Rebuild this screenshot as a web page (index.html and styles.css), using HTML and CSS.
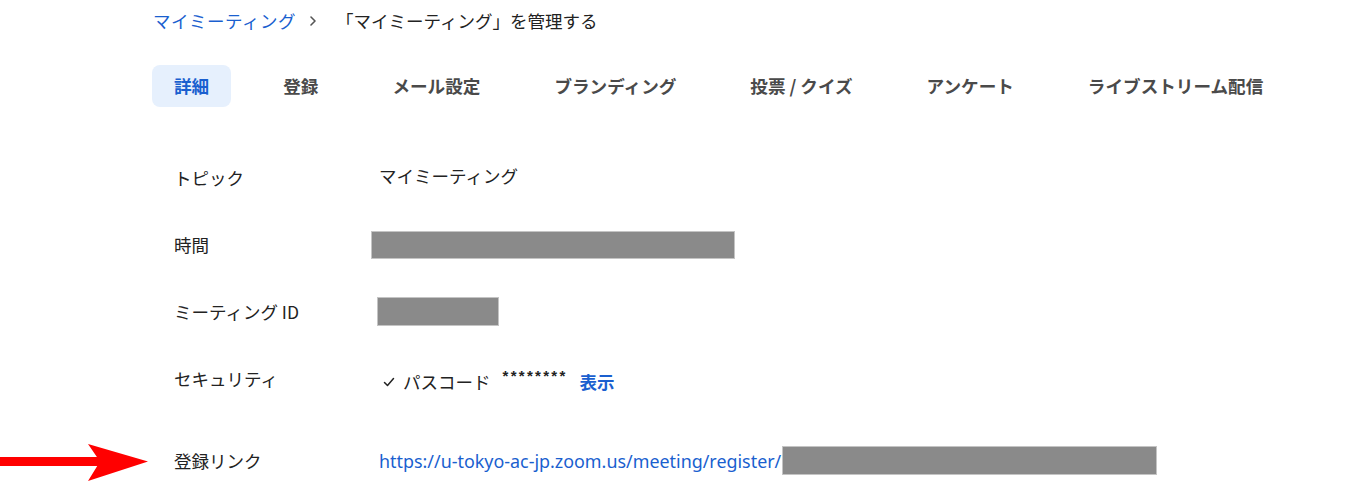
FILE: index.html
```html
<!DOCTYPE html>
<html lang="ja">
<head>
<meta charset="utf-8">
<title>「マイミーティング」を管理する</title>
<link rel="stylesheet" href="styles.css">
</head>
<body>
<div class="page">
  <nav class="breadcrumb">
    <a class="crumb-link" href="#">マイミーティング</a>
    <svg class="crumb-sep" width="10" height="12" viewBox="0 0 10 12"><path d="M3 2 L7 6 L3 10" fill="none" stroke="#555" stroke-width="1.6" stroke-linecap="round" stroke-linejoin="round"/></svg>
    <span class="crumb-current">「マイミーティング」を管理する</span>
  </nav>

  <div class="tabs">
    <span class="tab active">詳細</span>
    <span class="tab">登録</span>
    <span class="tab">メール設定</span>
    <span class="tab">ブランディング</span>
    <span class="tab">投票 / クイズ</span>
    <span class="tab">アンケート</span>
    <span class="tab">ライブストリーム配信</span>
  </div>

  <div class="details">
    <div class="row">
      <div class="label">トピック</div>
      <div class="value topic">マイミーティング</div>
    </div>
    <div class="row">
      <div class="label">時間</div>
      <div class="value"><span class="redact redact-time"></span></div>
    </div>
    <div class="row">
      <div class="label">ミーティング ID</div>
      <div class="value"><span class="redact redact-id"></span></div>
    </div>
    <div class="row">
      <div class="label">セキュリティ</div>
      <div class="value security">
        <svg class="check" width="12" height="10" viewBox="0 0 12 10"><path d="M1.5 5.5 L4.5 8.5 L10.5 1.5" fill="none" stroke="#222" stroke-width="1.5" stroke-linecap="round" stroke-linejoin="round"/></svg>
        <span class="pass-label">パスコード</span>
        <span class="stars">********</span>
        <a class="show" href="#">表示</a>
      </div>
    </div>
    <div class="row row-link">
      <div class="label">登録リンク</div>
      <div class="value link-value">
        <a class="reg-link" href="#">https://u-tokyo-ac-jp.zoom.us/meeting/register/</a><span class="redact redact-link"></span>
      </div>
    </div>
  </div>

  <svg class="arrow" width="150" height="40" viewBox="0 0 150 40">
    <rect x="0" y="14" width="100" height="9" fill="#ff0000"/>
    <polygon points="88,1 148,18.5 88,38 100,18.5" fill="#ff0000"/>
  </svg>
</div>
</body>
</html>
```

FILE: styles.css
```css
* { box-sizing: border-box; }

html, body {
  margin: 0;
  padding: 0;
  background: #ffffff;
}

body {
  font-family: "Noto Sans CJK JP", "Noto Sans", sans-serif;
  color: #232333;
}

.page {
  position: relative;
  width: 1353px;
  height: 499px;
  padding-left: 152px;
  overflow: hidden;
}

.breadcrumb {
  display: flex;
  align-items: center;
  height: 24px;
  margin-top: 9px;
  font-size: 17.5px;
  line-height: 24px;
}

.crumb-link {
  color: #1a5fcf;
  text-decoration: none;
  margin-left: 1px;
  letter-spacing: 0.5px;
}

.crumb-sep {
  margin-left: 12px;
  margin-right: 18px;
}

.crumb-current {
  color: #222;
}

.tabs {
  display: flex;
  align-items: center;
  gap: 30px;
  margin-top: 32px;
}

.tab {
  display: block;
  height: 42px;
  line-height: 42px;
  padding: 0 22px;
  border-radius: 8px;
  font-size: 17.6px;
  font-weight: 700;
  color: #4a4a4a;
}

.tab.active {
  background: #e6f0fd;
  color: #1a5fcf;
}

.details {
  margin-top: 37px;
  padding-left: 22px;
}

.row {
  display: grid;
  grid-template-columns: 205px 1fr;
  align-items: center;
  height: 67px;
}

.row-link {
  margin-top: 15px;
}

.label {
  font-size: 17.5px;
  color: #222;
}

.value {
  display: flex;
  align-items: center;
  font-size: 17.5px;
  color: #222;
}

.topic {
  margin-top: -4px;
}

.redact {
  display: block;
  background: #8a8a8a;
  border: 1px solid #c4c4c4;
}

.redact-time {
  width: 364px;
  height: 28px;
  margin-left: -8px;
}

.redact-id {
  width: 122px;
  height: 29px;
  margin-left: -2px;
}

.security {
  padding-top: 6px;
}

.check {
  margin-left: 4px;
  margin-right: 8px;
}

.pass-label {
  margin-right: 12px;
}

.stars {
  font-family: "Liberation Sans", sans-serif;
  font-size: 15px;
  font-weight: 700;
  align-self: flex-start;
  margin-top: -2px;
  letter-spacing: 2.3px;
  margin-right: 12px;
}

.show {
  color: #1a5fcf;
  text-decoration: none;
  font-weight: 700;
  font-size: 17.5px;
}

.reg-link {
  color: #1a5fcf;
  text-decoration: none;
  font-family: "Noto Sans", sans-serif;
  font-size: 17.9px;
}

.redact-link {
  width: 375px;
  height: 29px;
  margin-left: 1px;
}

.arrow {
  position: absolute;
  left: 0;
  top: 443px;
}
```
